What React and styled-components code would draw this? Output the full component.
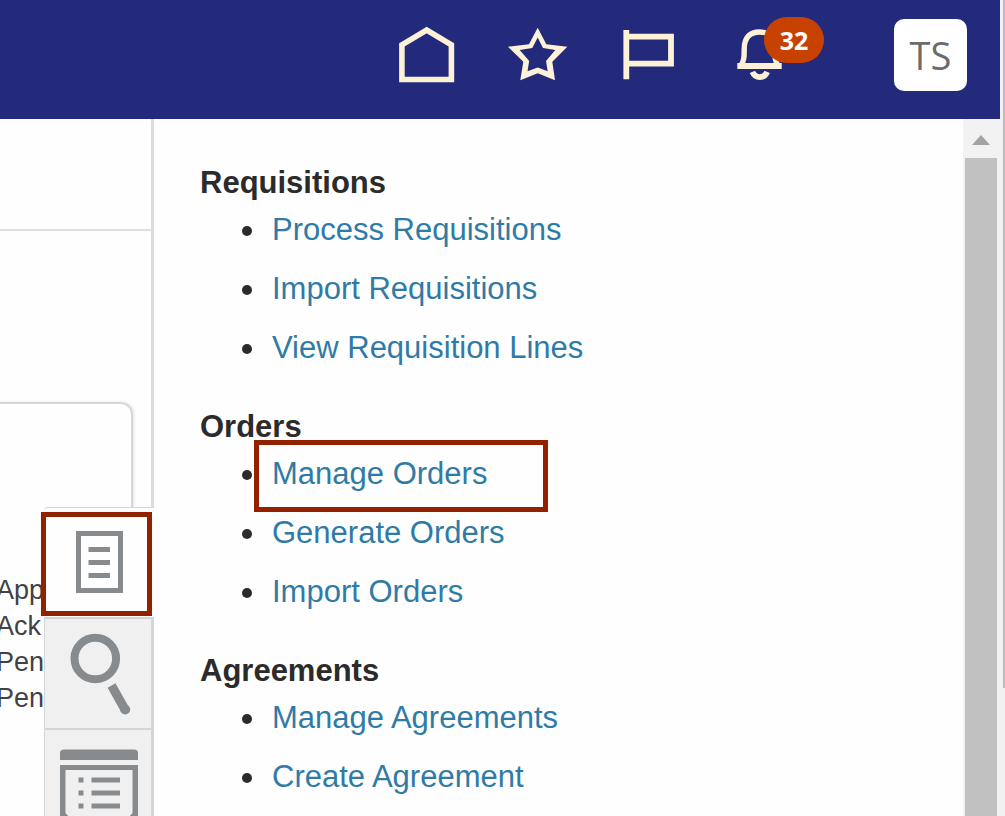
import React from "react";
import styled, { createGlobalStyle } from "styled-components";

const GlobalStyle = createGlobalStyle`
  *, *::before, *::after { box-sizing: border-box; }
  body {
    margin: 0;
    background: #fefefe;
    color: #2b2b2b;
    font-family: "Liberation Sans", Arial, sans-serif;
  }
`;

const Window = styled.div`
  display: flex;
  height: 100vh;
  overflow: hidden;
`;

const Page = styled.div`
  flex: 1;
  min-width: 0;
  display: flex;
  flex-direction: column;
`;

const WindowScrollbar = styled.div`
  flex: none;
  width: 5px;
  padding-left: 3px;
  background: #f1f1f1;
`;

const WindowThumb = styled.div`
  height: 688px;
  background: #bcbcbe;
`;

const Header = styled.header`
  flex: none;
  display: flex;
  align-items: center;
  justify-content: flex-end;
  padding: 19px 33px 28px;
  background: #232a7c;
`;

const IconBar = styled.nav`
  display: flex;
  gap: 51px;
  margin-right: 104px;
`;

const IconButton = styled.button`
  position: relative;
  display: block;
  width: 60px;
  height: 60px;
  padding: 0;
  border: 0;
  background: none;
  color: #fdf1d8;
  cursor: pointer;

  svg { display: block; }
`;

const Badge = styled.span`
  position: absolute;
  top: -8px;
  left: 34px;
  width: 60px;
  height: 46px;
  border-radius: 23px;
  background: #c74200;
  color: #fff;
  font: 700 25px/46px "Open Sans", sans-serif;
  text-align: center;
`;

const Avatar = styled.button`
  width: 73px;
  height: 72px;
  padding: 0;
  border: 0;
  border-radius: 10px;
  background: #fff;
  color: #6c6c6c;
  font: 400 38px/70px "Open Sans", sans-serif;
  cursor: pointer;
`;

const Body = styled.div`
  flex: 1;
  min-height: 0;
  display: flex;
`;

const Side = styled.aside`
  position: relative;
  flex: none;
  width: 154px;
  overflow: hidden;
  border-right: 3px solid #dcdcde;
`;

const SideTop = styled.div`
  height: 112px;
  border-bottom: 2px solid #dfe0e2;
`;

const Card = styled.section`
  width: 133px;
  height: 560px;
  margin-top: 171px;
  padding-top: 168px;
  border: 2px solid #d6d7d9;
  border-left: 0;
  border-radius: 0 12px 0 0;
  box-shadow: 1px 0 3px #e4e4e6;
`;

const StatusList = styled.ul`
  margin: 0 0 0 -4px;
  padding: 0;
  list-style: none;
  color: #404246;
  font-size: 27px;
  line-height: 36px;
`;

const Rail = styled.div`
  position: absolute;
  top: 507px;
  left: 44px;
  width: 110px;
`;

const RailTab = styled.button`
  display: block;
  width: 100%;
  height: ${(p) => (p.$active ? "110px" : "111px")};
  padding: 0;
  border: solid #d3d5d7;
  border-width: ${(p) => (p.$active ? "1px 0 0" : "2px 3px 0 1px")};
  border-radius: ${(p) => (p.$active ? "4px 0 0 0" : "0")};
  background: ${(p) => (p.$active ? "#fefefe" : "#f0f0f0")};
  color: #888b8e;
  cursor: pointer;

  svg { display: block; }
`;

const RailMark = styled.span`
  position: absolute;
  top: 5px;
  left: -3px;
  width: 111px;
  height: 104px;
  border: 5px solid #922100;
  pointer-events: none;
`;

const Panel = styled.main`
  flex: 1;
  min-width: 0;
  overflow: hidden;
  padding: 46px 46px 0;
  display: flex;
  flex-direction: column;
  gap: 32px;
`;

const Title = styled.h2`
  margin: 0;
  font-size: 31px;
  line-height: 35px;
  font-weight: 700;
`;

const TaskList = styled.ul`
  margin: 0;
  padding: 0 0 0 42px;
  list-style: none;
`;

const TaskItem = styled.li`
  position: relative;
  display: flex;
  align-items: center;
  gap: 20px;
  height: 59px;
  font-size: 31px;
  line-height: 35px;

  &::before {
    content: "";
    flex: none;
    width: 10px;
    height: 10px;
    margin-top: 2px;
    border-radius: 50%;
    background: #2b2b2b;
  }
`;

const TaskLink = styled.a`
  color: #2f7ba6;
  text-decoration: none;
`;

const TaskMark = styled.span`
  position: absolute;
  top: -4px;
  left: 12px;
  width: 294px;
  height: 72px;
  border: 5px solid #922100;
  pointer-events: none;
`;

const Scrollbar = styled.div`
  flex: none;
  display: flex;
  flex-direction: column;
  width: 37px;
  padding: 2px 3px 0 2px;
  background: #f2f2f2;
`;

const ScrollUp = styled.button`
  flex: none;
  display: flex;
  align-items: center;
  justify-content: center;
  height: 37px;
  padding: 0;
  border: 0;
  background: none;
`;

const ScrollThumb = styled.div`
  flex: 1;
  background: #c1c1c1;
`;

const HomeIcon = () => (
  <svg width="60" height="60" viewBox="0 0 60 60" fill="none" stroke="currentColor" strokeWidth="5.6" aria-hidden="true">
    <path d="M4.9 19.8 29.7 5 54.4 19.8V54.5H4.9Z" />
  </svg>
);

const StarIcon = () => (
  <svg width="60" height="60" viewBox="0 0 60 60" fill="currentColor" fillRule="evenodd" aria-hidden="true">
    <path d="M29.7 2.7 38.3 19.3 59.3 21.7 44.3 36.7 47 55.3 29.7 48.3 12.3 55.3 15.3 36.7 0 21.7 21 19.3ZM29.7 12.5 24.3 22.9 11.7 25 21.2 36 19.5 46.3 29.7 42.5 39.7 46.3 38 36 47.3 25 35 22.9Z" />
  </svg>
);

const FlagIcon = () => (
  <svg width="60" height="60" viewBox="0 0 60 60" fill="none" stroke="currentColor" strokeWidth="5.8" aria-hidden="true">
    <path d="M7.3 5V54.3M7.3 11.7H52V38.7H7.3" />
  </svg>
);

const BellIcon = () => (
  <svg width="60" height="60" viewBox="0 0 60 60" fill="none" stroke="currentColor" strokeWidth="5.4" aria-hidden="true">
    <path d="M7.3 41H51.7" strokeWidth="6" />
    <path d="M10.500 41C14.4 36 14.2 31 14.2 24 14.2 12.5 20 7 29.5 7S44.8 12.5 44.8 24C44.8 31 44.6 36 48.500 41" />
    <path d="M22.4 46.8C25.4 53.8 34.2 53.8 37.2 46.8" strokeWidth="5.8" />
  </svg>
);

const DocumentIcon = () => (
  <svg width="110" height="109" viewBox="0 0 110 109" fill="none" stroke="currentColor" strokeWidth="5" aria-hidden="true">
    <path d="M34.5 25.5H76.5V82.5H34.5ZM44.5 41.5H66M44.5 54.5H66M44.5 67.5H66" />
  </svg>
);

const SearchIcon = () => (
  <svg width="106" height="109" viewBox="1 1 106 109" fill="none" stroke="currentColor" aria-hidden="true">
    <circle cx="51.3" cy="40.5" r="20.8" strokeWidth="8" />
    <path d="M67.5 67.5 81 91.5" strokeWidth="9" />
    <circle cx="81.2" cy="91.5" r="5" fill="currentColor" stroke="none" />
  </svg>
);

const ReportIcon = () => (
  <svg width="106" height="109" viewBox="1 1 106 109" fill="currentColor" aria-hidden="true">
    <path d="M16 31V24Q16 20.500 20 20.500H90Q94 20.500 94 24V31Z" />
    <path fillRule="evenodd" d="M16 36H94V94H16ZM21.500 41V84L26 89H84L88.500 84V41Z" />
    <path d="M34.500 48.500h5v5h-5zM34.500 61.500h5v5h-5zM34.500 74.500h5v5h-5zM47.500 48.500h28.500v5h-28.500zM47.500 61.500h28.500v5h-28.500zM47.500 74.500h28.500v5h-28.500z" />
  </svg>
);

const sections = [
  { title: "Requisitions", tasks: ["Process Requisitions", "Import Requisitions", "View Requisition Lines"] },
  { title: "Orders", tasks: ["Manage Orders", "Generate Orders", "Import Orders"], marked: "Manage Orders" },
  { title: "Agreements", tasks: ["Manage Agreements", "Create Agreement"] },
];

export default function App() {
  return (
    <>
      <GlobalStyle />
      <Window>
        <Page>
          <Header>
            <IconBar aria-label="Global">
              <IconButton aria-label="Home"><HomeIcon /></IconButton>
              <IconButton aria-label="Favorites"><StarIcon /></IconButton>
              <IconButton aria-label="Watchlist"><FlagIcon /></IconButton>
              <IconButton aria-label="Notifications">
                <BellIcon />
                <Badge>32</Badge>
              </IconButton>
            </IconBar>
            <Avatar>TS</Avatar>
          </Header>
          <Body>
            <Side>
              <SideTop />
              <Card>
                <StatusList>
                  <li>App</li>
                  <li>Ack</li>
                  <li>Pen</li>
                  <li>Pen</li>
                </StatusList>
              </Card>
            </Side>
            <Rail>
              <RailTab $active aria-label="Tasks"><DocumentIcon /></RailTab>
              <RailTab aria-label="Search"><SearchIcon /></RailTab>
              <RailTab aria-label="Reports"><ReportIcon /></RailTab>
              <RailMark />
            </Rail>
            <Panel>
              {sections.map((section) => (
                <section key={section.title}>
                  <Title>{section.title}</Title>
                  <TaskList>
                    {section.tasks.map((task) => (
                      <TaskItem key={task}>
                        <TaskLink href="#">{task}</TaskLink>
                        {section.marked === task && <TaskMark />}
                      </TaskItem>
                    ))}
                  </TaskList>
                </section>
              ))}
            </Panel>
            <Scrollbar>
              <ScrollUp aria-label="Scroll up">
                <svg width="18" height="10" viewBox="0 0 18 10" fill="#a3a3a3" aria-hidden="true">
                  <path d="M0 10 9 0 18 10Z" />
                </svg>
              </ScrollUp>
              <ScrollThumb />
            </Scrollbar>
          </Body>
        </Page>
        <WindowScrollbar>
          <WindowThumb />
        </WindowScrollbar>
      </Window>
    </>
  );
}
